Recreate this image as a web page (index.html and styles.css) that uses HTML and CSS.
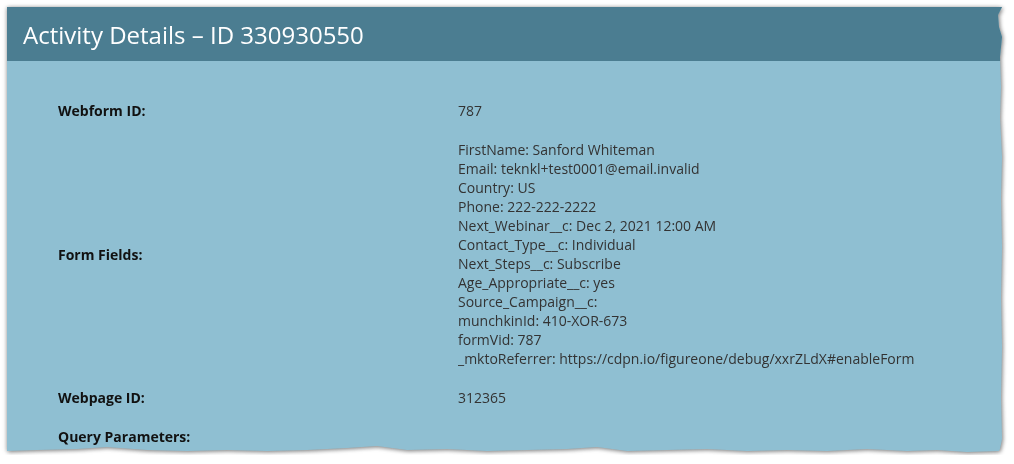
FILE: index.html
```html
<!DOCTYPE html>
<html lang="en">
<head>
  <meta charset="UTF-8">
  <meta name="viewport" content="width=device-width, initial-scale=1">
  <title>Activity Details</title>
  <link rel="stylesheet" href="styles.css">
</head>
<body>

  <div class="paper">
    <div class="panel">
      <div class="panel-header">
        <h1>Activity Details – ID 330930550</h1>
      </div>

      <table class="details">
        <tr>
          <th>Webform ID:</th>
          <td>787</td>
        </tr>
        <tr>
          <th>Form Fields:</th>
          <td>
            FirstName: Sanford Whiteman<br>
            Email: teknkl+test0001@email.invalid<br>
            Country: US<br>
            Phone: 222-222-2222<br>
            Next_Webinar__c: Dec 2, 2021 12:00 AM<br>
            Contact_Type__c: Individual<br>
            Next_Steps__c: Subscribe<br>
            Age_Appropriate__c: yes<br>
            Source_Campaign__c:<br>
            munchkinId: 410-XOR-673<br>
            formVid: 787<br>
            _mktoReferrer: https://cdpn.io/figureone/debug/xxrZLdX#enableForm
          </td>
        </tr>
        <tr>
          <th>Webpage ID:</th>
          <td>312365</td>
        </tr>
        <tr>
          <th>Query Parameters:</th>
          <td></td>
        </tr>
      </table>
    </div>
  </div>

</body>
</html>
```

FILE: styles.css
```css
body {
  margin: 0;
  background-color: #fff;
  font-family: 'Open Sans', 'Liberation Sans', sans-serif;
}

/* torn paper look: shadow on the wrapper, ragged edge on the panel */
.paper {
  margin: 7px 0 0 7px;
  width: 997px;
  height: 448px;
  filter: drop-shadow(1px 1px 2px rgba(0,0,0,0.45)) drop-shadow(-1px 0 2px rgba(0,0,0,0.15));
}

.panel {
  height: 100%;
  background-color: #8fbfd2;
  clip-path: polygon(
    0 0, 995px 0, 991px 8px, 992px 20px, 995px 30px, 993px 50px, 994px 80px,
    993px 110px, 995px 150px, 994px 190px, 995px 240px, 994px 290px,
    995px 340px, 994px 390px, 995px 432px, 993px 442px, 992px 444px,
    960px 445px, 930px 443px, 900px 444px, 860px 442px, 820px 444px,
    780px 443px, 740px 444px, 700px 442px, 660px 443px, 620px 444px,
    590px 440px, 560px 442px, 520px 443px, 480px 444px, 440px 442px,
    400px 443px, 370px 439px, 340px 441px, 300px 443px, 260px 444px,
    220px 443px, 180px 444px, 140px 443px, 100px 440px, 70px 442px,
    30px 443px, 0 444px
  );
}

.panel-header {
  height: 54px;
  display: flex;
  align-items: center;
  padding-left: 16px;
  background-color: #4b7d91;
}

.panel-header h1 {
  margin: 0;
  color: #fff;
  font-size: 24px;
  font-weight: 400;
}

.details {
  margin-top: 30px;
  border-collapse: collapse;
  font-size: 14px;
  line-height: 19px;
}

.details th,
.details td {
  padding: 10px 0;
  text-align: left;
}

.details th {
  width: 400px;
  padding-left: 51px;
  color: #111;
  font-weight: 700;
  vertical-align: middle;
}

.details td {
  color: #333;
  vertical-align: top;
}
```
